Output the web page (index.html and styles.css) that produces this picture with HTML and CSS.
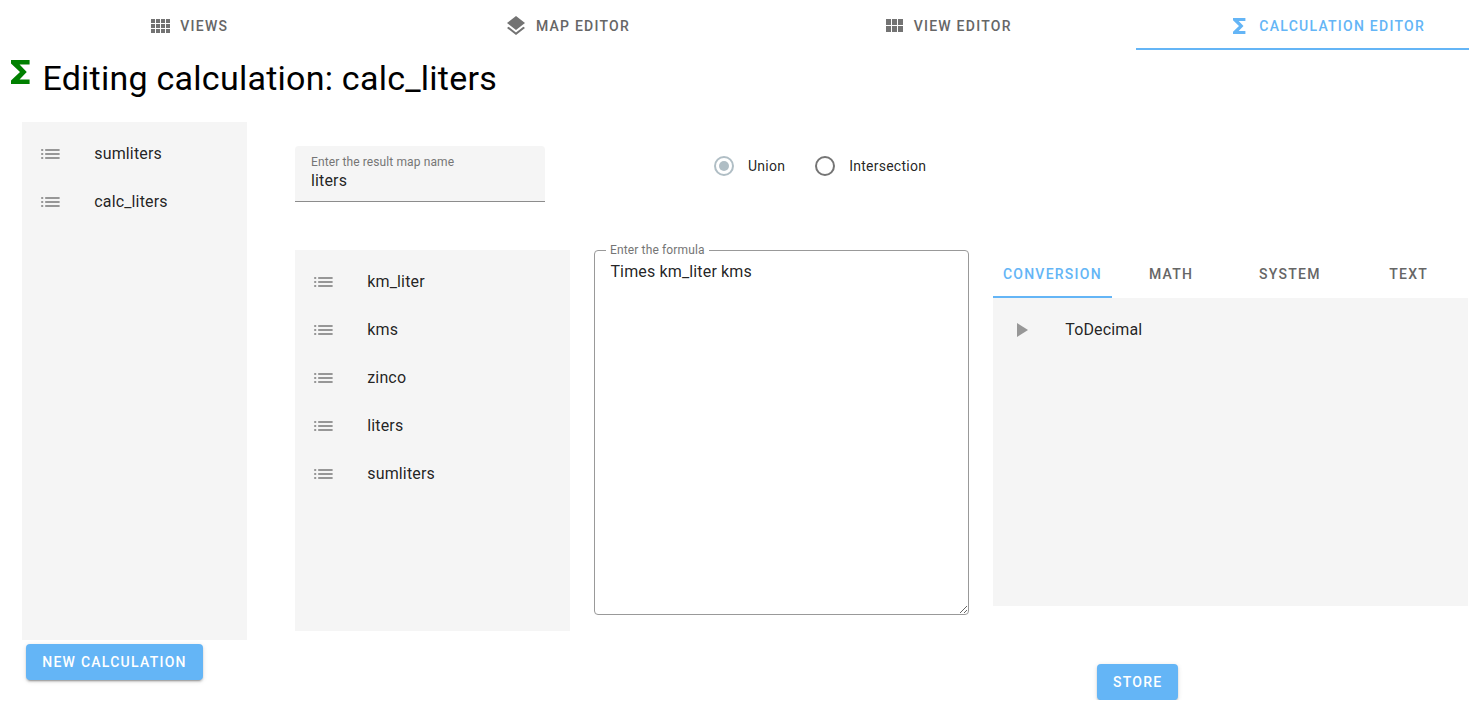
FILE: index.html
```html
<!DOCTYPE html>
<html lang="en">
<head>
<meta charset="utf-8">
<title>Calculation editor</title>
<link rel="stylesheet" href="styles.css">
</head>
<body>
<svg class="sprite" aria-hidden="true">
  <symbol id="list" viewBox="0 0 24 24"><path d="M3.2 13h2v-2h-2v2zm0 4h2v-2h-2v2zm0-8h2V7h-2v2zm4 4h14.4v-2H7.2v2zm0 4h14.4v-2H7.2v2zM7.2 7v2h14.4V7H7.2z"/></symbol>
  <symbol id="sigma" viewBox="0 0 24 24"><path d="M18.4 4H6v2.3l6 5.7-6 5.7V20h12.4v-3h-6.7l4.8-5-4.8-5h6.7z"/></symbol>
</svg>
<nav class="tabs main-tabs">
  <a class="tab"><svg class="icon" viewBox="0 0 24 24"><path d="M3 9h4V5H3v4zm0 5h4v-4H3v4zm5 0h4v-4H8v4zm5 0h4v-4h-4v4zM8 9h4V5H8v4zm5-4v4h4V5h-4zm5 9h4v-4h-4v4zM3 19h4v-4H3v4zm5 0h4v-4H8v4zm5 0h4v-4h-4v4zm5 0h4v-4h-4v4zm0-14v4h4V5h-4z"/></svg><span>VIEWS</span></a>
  <a class="tab"><svg class="icon" viewBox="0 0 24 24"><path d="M11.99 18.54l-7.37-5.73L3 14.07l9 7 9-7-1.63-1.27-7.38 5.74zM12 16l7.36-5.73L21 9l-9-7-9 7 1.63 1.27L12 16z"/></svg><span>MAP EDITOR</span></a>
  <a class="tab"><svg class="icon" viewBox="0 0 24 24"><path d="M4 11h5V5H4v6zm0 7h5v-6H4v6zm6 0h5v-6h-5v6zm6 0h5v-6h-5v6zm-6-7h5V5h-5v6zm6-6v6h5V5h-5z"/></svg><span>VIEW EDITOR</span></a>
  <a class="tab active"><svg class="icon"><use href="#sigma"/></svg><span>CALCULATION EDITOR</span></a>
</nav>
<header class="title">
  <svg class="title-icon"><use href="#sigma"/></svg>
  <h1>Editing calculation: calc_liters</h1>
</header>
<main class="page">
  <aside class="sidebar">
    <ul class="list calculations">
      <li><svg class="icon"><use href="#list"/></svg><span>sumliters</span></li>
      <li><svg class="icon"><use href="#list"/></svg><span>calc_liters</span></li>
    </ul>
    <button class="button">NEW CALCULATION</button>
  </aside>
  <section class="editor">
    <div class="settings">
      <label class="field"><span class="field-label">Enter the result map name</span><span class="field-value">liters</span></label>
      <div class="radios">
        <label class="radio checked"><i></i><span>Union</span></label>
        <label class="radio"><i></i><span>Intersection</span></label>
      </div>
    </div>
    <div class="columns">
      <ul class="list maps">
        <li><svg class="icon"><use href="#list"/></svg><span>km_liter</span></li>
        <li><svg class="icon"><use href="#list"/></svg><span>kms</span></li>
        <li><svg class="icon"><use href="#list"/></svg><span>zinco</span></li>
        <li><svg class="icon"><use href="#list"/></svg><span>liters</span></li>
        <li><svg class="icon"><use href="#list"/></svg><span>sumliters</span></li>
      </ul>
      <div class="formula">
        <span class="formula-label">Enter the formula</span>
        <textarea class="formula-input" spellcheck="false">Times km_liter kms</textarea>
      </div>
      <div class="functions">
        <nav class="tabs function-tabs">
          <a class="tab active">CONVERSION</a><a class="tab">MATH</a><a class="tab">SYSTEM</a><a class="tab">TEXT</a>
        </nav>
        <ul class="list function-list">
          <li><svg class="icon" viewBox="0 0 24 24"><path d="M8 5v14l11-7z"/></svg><span>ToDecimal</span></li>
        </ul>
        <button class="button store">STORE</button>
      </div>
    </div>
  </section>
</main>
</body>
</html>
```
FILE: styles.css
```css
* { box-sizing: border-box; }
body { margin: 0; background: #fff; font-family: Roboto, sans-serif; color: rgba(0,0,0,.87); overflow: hidden; }
.sprite { display: none; }
.icon { width: 24px; height: 24px; flex: none; fill: currentColor; }

.tabs { display: flex; height: 50px; overflow: hidden; }
.tab { flex: none; height: 100%; padding: 2px 0 0; display: flex; align-items: center; justify-content: center; gap: 8px; font-size: 14px; font-weight: 500; letter-spacing: 1.25px; line-height: 20px; color: #666; border-bottom: 2px solid transparent; }
.tab .icon { color: #737373; }
.tab.active, .tab.active .icon { color: #64b5f6; }
.tab.active { border-color: #64b5f6; }
.main-tabs .tab { padding-top: 4px; }
.main-tabs .tab:nth-child(1) { width: 376.6px; }
.main-tabs .tab:nth-child(2) { width: 380.8px; }
.main-tabs .tab:nth-child(3) { width: 378.6px; }
.main-tabs .tab:nth-child(4) { width: 380.4px; }

.title { display: flex; height: 72px; padding: 4px 0 0 2.4px; }
.title-icon { width: 36px; height: 36px; fill: #008000; }
.title h1 { margin: 4px 0 0 4px; font-size: 34px; font-weight: 400; line-height: 40px; letter-spacing: .25px; color: #000; }

.page { display: flex; gap: 48px; padding-left: 22px; }
.sidebar { width: 225px; flex: none; }
.list { margin: 0; padding: 8px 0; list-style: none; background: #f5f5f5; font-size: 16px; letter-spacing: .15px; }
.list li { display: flex; align-items: center; height: 48px; padding: 0 16px 0 16.25px; gap: 32px; }
.list span { padding-bottom: 2px; }
.list .icon { color: #979797; }
.calculations { height: 518px; }
.button { height: 36px; padding: 0 16px; border: 0; border-radius: 4px; background: #64b5f6; color: #fff; font: 500 14px/36px Roboto, sans-serif; letter-spacing: 1.25px; box-shadow: 0 3px 1px -2px rgba(0,0,0,.2), 0 2px 2px rgba(0,0,0,.14), 0 1px 5px rgba(0,0,0,.12); }
.sidebar .button { display: block; width: 177px; margin: 4px; white-space: nowrap; }

.editor { width: 1173px; flex: none; padding-top: 24px; }
.settings { display: flex; height: 104px; gap: 169px; }
.field { display: flex; flex-direction: column; width: 250px; height: 56px; padding: 9px 16px 0; border-radius: 4px 4px 0 0; background: #f5f5f5; border-bottom: 1px solid #8c8c8c; }
.field-label { font-size: 12px; line-height: 14px; letter-spacing: .11px; color: #757575; }
.field-value { font-size: 16px; line-height: 24px; letter-spacing: .15px; }
.radios { display: flex; gap: 30px; height: 40px; }
.radio { display: flex; align-items: center; gap: 14px; font-size: 14px; letter-spacing: .25px; }
.radio i { width: 20px; height: 20px; border: 2px solid #757575; border-radius: 50%; display: grid; place-items: center; }
.radio.checked i { border-color: #b0bec5; }
.radio.checked i::after { content: ""; width: 10px; height: 10px; border-radius: 50%; background: #b0bec5; }

.columns { display: flex; align-items: flex-start; gap: 24px; }
.maps { width: 275px; height: 381px; }
.formula { position: relative; width: 375px; height: 365px; }
.formula-label { position: absolute; left: 12px; top: -7px; padding: 0 4px; background: #fff; font-size: 12px; line-height: 14px; letter-spacing: .14px; color: #757575; }
.formula-input { display: block; width: 375px; height: 365px; padding: 9px 16px 8px 15.4px; border: 1px solid #999; border-radius: 4px; outline: 0; background: transparent; color: rgba(0,0,0,.87); font: 400 16px/24px Roboto, sans-serif; letter-spacing: .15px; }
.functions { width: 475px; display: flex; flex-direction: column; align-items: flex-start; }
.function-tabs { width: 475px; height: 48px; }
.function-tabs .tab { width: 118.75px; }
.function-list { width: 475px; height: 308px; }
.store { margin: 58px 0 0 104px; }
```
